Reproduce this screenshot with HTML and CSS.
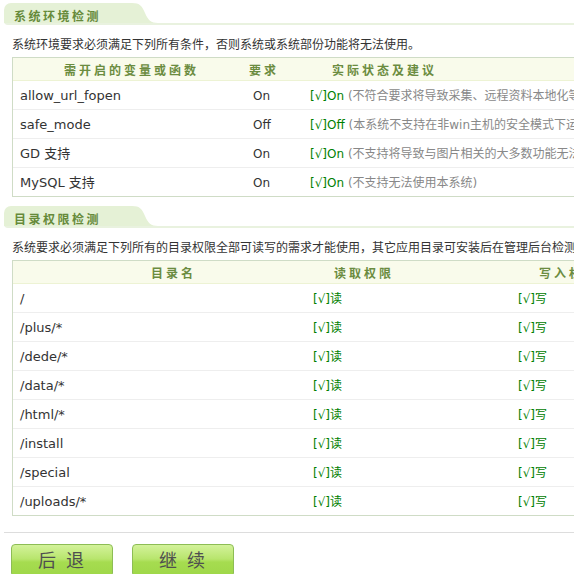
FILE: index.html
```html
<!DOCTYPE html>
<html lang="zh">
<head>
    <meta charset="UTF-8">
    <meta name="viewport" content="width=device-width, initial-scale=1.0">
    <title>安装向导 - 环境检测</title>
    <link rel="stylesheet" href="styles.css">
</head>
<body>
    <div class="main">
        <!-- 系统环境 -->
        <div class="sec-head">
            <h2 class="sec-title">系统环境检测</h2>
            <svg class="sec-curve" width="26" height="20" viewBox="0 0 26 20">
                <path d="M0 0 C8 0 10 3 13 10 C16 17 19 20 26 20 L0 20 Z" fill="#e5f1d6"/>
            </svg>
        </div>
        <p class="desc">系统环境要求必须满足下列所有条件，否则系统或系统部份功能将无法使用。</p>
        <table class="twbox env-table">
            <colgroup>
                <col class="c-name">
                <col class="c-need">
                <col>
            </colgroup>
            <tr>
                <th class="th-name">需开启的变量或函数</th>
                <th class="th-need">要求</th>
                <th class="th-state">实际状态及建议</th>
            </tr>
            <tr>
                <td class="name">allow_url_fopen</td>
                <td class="need">On</td>
                <td class="state"><span class="ok">[√]On</span> <span class="note">(不符合要求将导致采集、远程资料本地化等功能无法应用)</span></td>
            </tr>
            <tr>
                <td class="name">safe_mode</td>
                <td class="need">Off</td>
                <td class="state"><span class="ok">[√]Off</span> <span class="note">(本系统不支持在非win主机的安全模式下运行)</span></td>
            </tr>
            <tr>
                <td class="name">GD 支持</td>
                <td class="need">On</td>
                <td class="state"><span class="ok">[√]On</span> <span class="note">(不支持将导致与图片相关的大多数功能无法使用或引发警告)</span></td>
            </tr>
            <tr>
                <td class="name">MySQL 支持</td>
                <td class="need">On</td>
                <td class="state"><span class="ok">[√]On</span> <span class="note">(不支持无法使用本系统)</span></td>
            </tr>
        </table>

        <!-- 目录权限 -->
        <div class="sec-head">
            <h2 class="sec-title">目录权限检测</h2>
            <svg class="sec-curve" width="26" height="20" viewBox="0 0 26 20">
                <path d="M0 0 C8 0 10 3 13 10 C16 17 19 20 26 20 L0 20 Z" fill="#e5f1d6"/>
            </svg>
        </div>
        <p class="desc">系统要求必须满足下列所有的目录权限全部可读写的需求才能使用，其它应用目录可安装后在管理后台检测。</p>
        <table class="twbox dir-table">
            <colgroup>
                <col class="c-dir">
                <col class="c-read">
                <col>
            </colgroup>
            <tr>
                <th class="th-dir">目录名</th>
                <th class="th-perm">读取权限</th>
                <th class="th-perm">写入权限</th>
            </tr>
            <tr><td class="name">/</td><td class="perm"><span class="ok">[√]读</span></td><td class="perm"><span class="ok">[√]写</span></td></tr>
            <tr><td class="name">/plus/*</td><td class="perm"><span class="ok">[√]读</span></td><td class="perm"><span class="ok">[√]写</span></td></tr>
            <tr><td class="name">/dede/*</td><td class="perm"><span class="ok">[√]读</span></td><td class="perm"><span class="ok">[√]写</span></td></tr>
            <tr><td class="name">/data/*</td><td class="perm"><span class="ok">[√]读</span></td><td class="perm"><span class="ok">[√]写</span></td></tr>
            <tr><td class="name">/html/*</td><td class="perm"><span class="ok">[√]读</span></td><td class="perm"><span class="ok">[√]写</span></td></tr>
            <tr><td class="name">/install</td><td class="perm"><span class="ok">[√]读</span></td><td class="perm"><span class="ok">[√]写</span></td></tr>
            <tr><td class="name">/special</td><td class="perm"><span class="ok">[√]读</span></td><td class="perm"><span class="ok">[√]写</span></td></tr>
            <tr><td class="name">/uploads/*</td><td class="perm"><span class="ok">[√]读</span></td><td class="perm"><span class="ok">[√]写</span></td></tr>
        </table>

        <div class="butbox">
            <button class="btn">后 退</button>
            <button class="btn">继 续</button>
        </div>
    </div>
</body>
</html>
```

FILE: styles.css
```css
* {
    box-sizing: border-box;
    margin: 0;
    padding: 0;
}

html, body {
    overflow: hidden;
}

body {
    font-family: "DejaVu Sans", "Noto Sans CJK SC", sans-serif;
    font-size: 12px;
    color: #333;
    background: #fff;
}

.main {
    width: 744px;
    padding-left: 4px;
}

/* 分组标题：左侧圆角标签 + 弧形过渡 */
.sec-head {
    display: flex;
    align-items: flex-end;
    margin-top: 3px;
    border-bottom: 2px solid #e9f2df;
    border-bottom-left-radius: 4px;
}

.sec-title {
    height: 20px;
    padding: 6px 31px 0 10px;
    background-color: #e5f1d6;
    border-top-left-radius: 7px;
    font-family: "Noto Sans CJK SC", sans-serif;
    font-size: 12px;
    line-height: 14px;
    font-weight: bold;
    letter-spacing: 2.5px;
    color: #668a3a;
}

.sec-curve {
    display: block;
}

.desc {
    padding: 12px 0 6px 8px;
    line-height: 14px;
    white-space: nowrap;
    font-family: "Noto Sans CJK SC", sans-serif;
    color: #333;
}

/* 检测表格 */
.twbox {
    width: 720px;
    margin-left: 8px;
    margin-bottom: 9px;
    table-layout: fixed;
    border-collapse: separate;
    border-spacing: 0;
    border: 1px solid #cfdcc6;
}

.twbox th {
    padding: 5px 0 3px;
    line-height: 14px;
    background-color: #f9fbeb;
    border-bottom: 1px solid #edf3d4;
    font-family: "Noto Sans CJK SC", sans-serif;
    font-size: 12px;
    font-weight: bold;
    letter-spacing: 3px;
    color: #6b8c40;
    text-align: left;
    white-space: nowrap;
}

.twbox td {
    padding: 8px 0 6px;
    line-height: 14px;
    border-bottom: 1px solid #eee;
    white-space: nowrap;
}

.twbox tr:last-child td {
    border-bottom: none;
}

.env-table .c-name { width: 233px; }
.env-table .c-need { width: 57px; }

.dir-table .c-dir { width: 288px; }
.dir-table .c-read { width: 205px; }

.th-name {
    text-align: center !important;
    padding-left: 4px !important;
}

.th-need { padding-left: 3px !important; }
.th-state { padding-left: 29px !important; }
.th-dir { padding-left: 138px !important; }
.th-perm { padding-left: 33px !important; }

.twbox td.name {
    padding-left: 7px;
    font-size: 13px;
    color: #333;
}

.twbox td.need {
    padding-left: 7px;
}

.twbox td.state {
    padding-left: 7px;
}

.twbox td.perm {
    padding-left: 12px;
}

.ok {
    color: #008000;
}

.note {
    color: #888;
}

/* 底部按钮 */
.butbox {
    display: flex;
    gap: 19px;
    margin-top: 16px;
    padding: 11px 0 0 7px;
    border-top: 1px solid #ddd;
}

.btn {
    width: 102px;
    height: 33px;
    padding: 0 0 3px 1px;
    border: 1px solid #8dbd55;
    border-radius: 4px;
    background: linear-gradient(#d3f29a, #b8e56d 45%, #a6dc50 55%, #9ed748);
    font-family: "Noto Sans CJK SC", sans-serif;
    font-size: 18px;
    letter-spacing: 3px;
    color: #4f4f4f;
    cursor: pointer;
}
```
